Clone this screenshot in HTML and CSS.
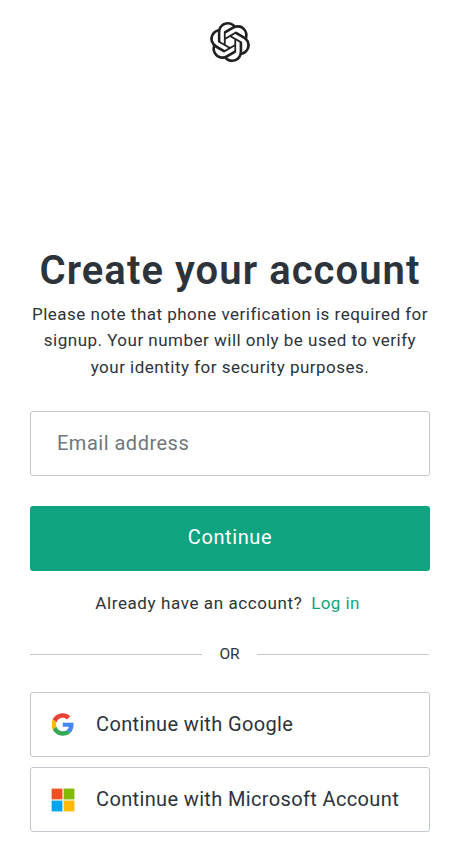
FILE: index.html
```html
<!DOCTYPE html>
<html lang="en">
<head>
    <meta charset="UTF-8">
    <meta name="viewport" content="width=device-width, initial-scale=1.0">
    <title>Create your account</title>
    <link rel="stylesheet" href="styles.css">
</head>
<body>
    <header class="header">
        <svg class="logo" viewBox="0 0 24 24" role="img" aria-label="OpenAI">
            <path fill="currentColor" d="M22.2819 9.8211a5.9847 5.9847 0 0 0-.5157-4.9108 6.0462 6.0462 0 0 0-6.5098-2.9A6.0651 6.0651 0 0 0 4.9807 4.1818a5.9847 5.9847 0 0 0-3.9977 2.9 6.0462 6.0462 0 0 0 .7427 7.0966 5.98 5.98 0 0 0 .511 4.9107 6.051 6.051 0 0 0 6.5146 2.9001A5.9847 5.9847 0 0 0 13.2599 24a6.0557 6.0557 0 0 0 5.7718-4.2058 5.9894 5.9894 0 0 0 3.9977-2.9001 6.0557 6.0557 0 0 0-.7475-7.0729zm-9.022 12.6081a4.4755 4.4755 0 0 1-2.8764-1.0408l.1419-.0804 4.7783-2.7582a.7948.7948 0 0 0 .3927-.6813v-6.7369l2.02 1.1686a.071.071 0 0 1 .038.052v5.5826a4.504 4.504 0 0 1-4.4945 4.4944zm-9.6607-4.1254a4.4708 4.4708 0 0 1-.5346-3.0137l.142.0852 4.783 2.7582a.7712.7712 0 0 0 .7806 0l5.8428-3.3685v2.3324a.0804.0804 0 0 1-.0332.0615L9.74 19.9502a4.4992 4.4992 0 0 1-6.1408-1.6464zM2.3408 7.8956a4.485 4.485 0 0 1 2.3655-1.9728V11.6a.7664.7664 0 0 0 .3879.6765l5.8144 3.3543-2.0201 1.1685a.0757.0757 0 0 1-.071 0l-4.8303-2.7865A4.504 4.504 0 0 1 2.3408 7.872zm16.5963 3.8558L13.1038 8.364 15.1192 7.2a.0757.0757 0 0 1 .071 0l4.8303 2.7913a4.4944 4.4944 0 0 1-.6765 8.1042v-5.6772a.79.79 0 0 0-.407-.667zm2.0107-3.0231l-.142-.0852-4.7735-2.7818a.7759.7759 0 0 0-.7854 0L9.409 9.2297V6.8974a.0662.0662 0 0 1 .0284-.0615l4.8303-2.7866a4.4992 4.4992 0 0 1 6.6802 4.66zM8.3065 12.863l-2.02-1.1638a.0804.0804 0 0 1-.038-.0567V6.0742a4.4992 4.4992 0 0 1 7.3757-3.4537l-.142.0805L8.704 5.459a.7948.7948 0 0 0-.3927.6813zm1.0976-2.3654l2.602-1.4998 2.6069 1.4998v2.9994l-2.5974 1.4997-2.6067-1.4997Z"/>
        </svg>
    </header>
    <main class="container">
        <h1 class="title">Create your account</h1>
        <p class="description">Please note that phone verification is required for<br>signup. Your number will only be used to verify<br>your identity for security purposes.</p>
        <form class="form">
            <input class="email" type="email" placeholder="Email address" aria-label="Email address">
            <button class="continue" type="submit">Continue</button>
        </form>
        <p class="login">Already have an account? <a class="login-link" href="#">Log in</a></p>
        <div class="divider"><span>OR</span></div>
        <div class="social">
            <button class="social-button" type="button">
                <svg class="google" viewBox="0 0 48 48">
                    <path fill="#EA4335" d="M24 9.5c3.54 0 6.71 1.22 9.21 3.6l6.85-6.85C35.9 2.38 30.47 0 24 0 14.62 0 6.51 5.38 2.56 13.22l7.98 6.19C12.43 13.72 17.74 9.5 24 9.5z"/>
                    <path fill="#4285F4" d="M46.98 24.55c0-1.57-.15-3.09-.38-4.55H24v9.02h12.94c-.58 2.96-2.26 5.48-4.78 7.18l7.73 6c4.51-4.18 7.09-10.36 7.09-17.65z"/>
                    <path fill="#FBBC05" d="M10.53 28.59c-.48-1.45-.76-2.99-.76-4.59s.27-3.14.76-4.59l-7.98-6.19C.92 16.46 0 20.12 0 24c0 3.88.92 7.54 2.56 10.78l7.97-6.19z"/>
                    <path fill="#34A853" d="M24 48c6.48 0 11.93-2.13 15.89-5.81l-7.73-6c-2.15 1.45-4.92 2.3-8.16 2.3-6.26 0-11.57-4.22-13.47-9.91l-7.98 6.19C6.51 42.62 14.62 48 24 48z"/>
                </svg>
                <span>Continue with Google</span>
            </button>
            <button class="social-button" type="button">
                <svg class="microsoft" viewBox="0 0 24 24">
                    <path fill="#F25022" d="M.6.6h10.8v10.8H.6z"/>
                    <path fill="#7FBA00" d="M12.6.6h10.8v10.8H12.6z"/>
                    <path fill="#00A4EF" d="M.6 12.6h10.8v10.8H.6z"/>
                    <path fill="#FFB900" d="M12.6 12.6h10.8v10.8H12.6z"/>
                </svg>
                <span>Continue with Microsoft Account</span>
            </button>
        </div>
    </main>
</body>
</html>
```
FILE: styles.css
```css
*,
*::before,
*::after{
    padding: 0;
    margin: 0;
    box-sizing: border-box;
}
body{
    background-color: #ffffff;
    color: #2d333a;
    font-family: Roboto, "Liberation Sans", sans-serif;
}
input,
button{
    font-family: inherit;
    font-size: 20px;
    height: 65px;
    border-radius: 3px;
}
.header{
    height: 240px;
    padding-top: 22px;
    text-align: center;
}
.logo{
    width: 40px;
    height: 40px;
    color: #202123;
}
.container{
    width: 400px;
    margin: 0 29px 0 30px;
}
.title{
    font-size: 40px;
    font-weight: 600;
    line-height: 61px;
    letter-spacing: 1.06px;
    text-align: center;
    white-space: nowrap;
}
.description{
    font-size: 17px;
    line-height: 26.4px;
    letter-spacing: 0.49px;
    text-align: center;
    white-space: nowrap;
}
.form{
    display: flex;
    flex-direction: column;
    gap: 30px;
    margin-top: 30.8px;
}
.email{
    width: 100%;
    padding: 0 26px 1px;
    border: 1px solid #c2c8d0;
    color: #2d333a;
    letter-spacing: 0.5px;
}
.email::placeholder{
    color: #6f777c;
}
.continue{
    padding-bottom: 3px;
    border: none;
    background-color: #10a37f;
    color: #ffffff;
    letter-spacing: 0.6px;
}
.login{
    margin-top: 19px;
    padding-right: 5px;
    font-size: 17px;
    line-height: 26px;
    letter-spacing: 0.6px;
    text-align: center;
}
.login-link{
    margin-left: 4px;
    color: #10a37f;
    letter-spacing: 0.4px;
    text-decoration: none;
}
.divider{
    display: flex;
    align-items: center;
    gap: 17px;
    height: 25px;
    margin-top: 26px;
    padding-right: 1px;
    font-size: 15.5px;
}
.divider span{
    padding-bottom: 2px;
}
.divider::before,
.divider::after{
    content: "";
    flex: 1;
    height: 1px;
    background-color: #c2c8d0;
}
.social{
    display: flex;
    flex-direction: column;
    gap: 10px;
    margin-top: 25px;
}
.social-button{
    display: flex;
    align-items: center;
    gap: 21px;
    padding: 0 20px 1px;
    border: 1px solid #c2c8d0;
    background-color: #ffffff;
    color: #2d333a;
    letter-spacing: 0.36px;
    white-space: nowrap;
}
.google,
.microsoft{
    width: 24px;
    height: 24px;
    margin-top: 2px;
    flex-shrink: 0;
}
.google{
    padding: 0 1px 1px 0.5px;
}
```
